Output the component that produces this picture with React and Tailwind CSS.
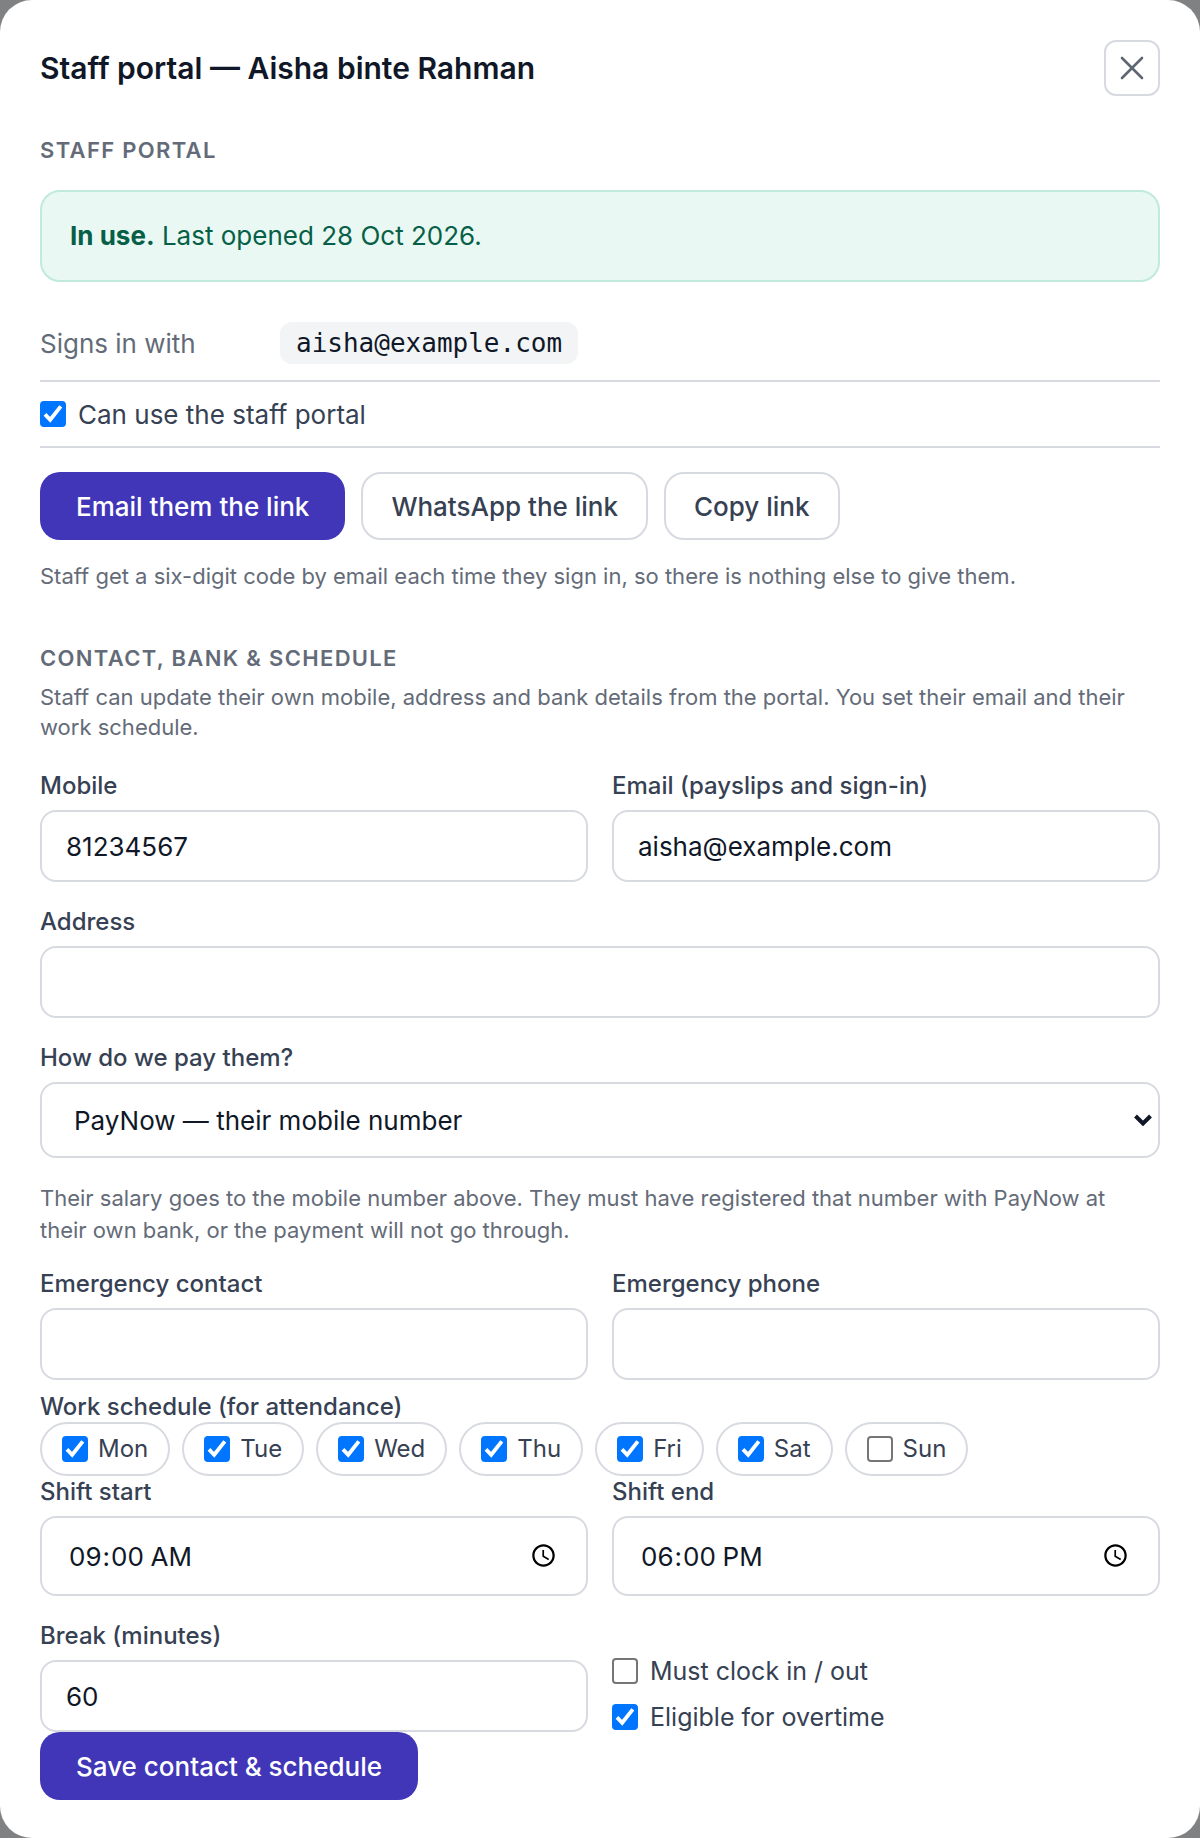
import { useState } from "react";

const inputClass =
  "block w-full text-[26px] text-gray-900 bg-white border-2 border-[#d7dae0] rounded-2xl";
const labelClass = "block mb-2 text-2xl leading-8 font-medium text-gray-700";
const sectionClass =
  "text-[22px] leading-8 font-semibold tracking-[0.06em] uppercase text-[#646b78]";
const buttonClass = "h-[68px] rounded-[20px] text-[26px] font-medium";
const primaryClass = "px-9 bg-[#4036b7] text-white";
const outlineClass = "px-7 bg-white border-2 border-[#d7dae0] text-gray-700";

const Field = ({ id, label, type = "text", value, onChange }) => (
  <div>
    <label htmlFor={id} className={labelClass}>
      {label}
    </label>
    <input
      id={id}
      type={type}
      value={value}
      onChange={(e) => onChange(id, e.target.value)}
      className={`${inputClass} ${
        type === "time" ? "h-20 px-[26px]" : "h-[72px] px-6"
      }`}
    />
  </div>
);

const Checkbox = ({ checked, onChange }) => (
  <span className="grid shrink-0">
    <input
      type="checkbox"
      checked={checked}
      onChange={onChange}
      className="col-start-1 row-start-1 w-[26px] h-[26px] appearance-none bg-white border-2 border-[#767676] rounded checked:bg-[#0075ff] checked:border-[#0075ff]"
    />
    {checked && (
      <svg
        viewBox="0 0 26 26"
        fill="none"
        stroke="white"
        strokeWidth="3.8"
        className="col-start-1 row-start-1 w-[26px] h-[26px] pointer-events-none"
      >
        <path d="M5 13.4l5.2 5.4L20.8 5.4" />
      </svg>
    )}
  </span>
);

const weekdays = ["Mon", "Tue", "Wed", "Thu", "Fri", "Sat", "Sun"];

const App = () => {
  const [form, setForm] = useState({
    mobile: "81234567",
    email: "aisha@example.com",
    address: "",
    payMethod: "paynow-mobile",
    emergencyContact: "",
    emergencyPhone: "",
    shiftStart: "09:00",
    shiftEnd: "18:00",
    breakMinutes: "60",
  });
  const [portalAccess, setPortalAccess] = useState(true);
  const [mustClock, setMustClock] = useState(false);
  const [overtime, setOvertime] = useState(true);
  const [workDays, setWorkDays] = useState(weekdays.slice(0, 6));

  const setField = (name, value) => setForm({ ...form, [name]: value });

  const toggleDay = (day) => {
    setWorkDays(
      workDays.includes(day)
        ? workDays.filter((d) => d !== day)
        : [...workDays, day]
    );
  };

  return (
    <div className="min-h-screen bg-[#808183] font-['Inter',sans-serif]">
      <div
        role="dialog"
        aria-labelledby="dialog-title"
        className="bg-white rounded-[32px] px-10 pt-10 pb-[38px]"
      >
        {/* Header */}
        <div className="flex items-center justify-between">
          <h1
            id="dialog-title"
            className="text-[30px] leading-10 font-semibold text-gray-900"
          >
            Staff portal — Aisha binte Rahman
          </h1>
          <button
            type="button"
            aria-label="Close"
            className="w-14 h-14 flex items-center justify-center border-2 border-[#d7dae0] rounded-xl text-[#5f6673]"
          >
            <svg
              viewBox="0 0 24 24"
              fill="none"
              stroke="currentColor"
              strokeWidth="2.6"
              strokeLinecap="round"
              className="w-6 h-6"
            >
              <path d="M2 2l20 20M22 2L2 22" />
            </svg>
          </button>
        </div>

        {/* Portal access */}
        <h2 className={`mt-[38px] ${sectionClass}`}>Staff portal</h2>
        <div className="mt-6 px-7 py-6 border-2 border-[#bfeadc] rounded-[20px] bg-[#e9f8f3] text-[26px] leading-10 text-[#065f46]">
          <strong className="font-bold">In use.</strong> Last opened 28 Oct
          2026.
        </div>

        <div className="mt-6 py-4 flex items-center border-b-2 border-[#d7dae0] text-[26px]">
          <span className="w-60 text-[#646b78]">Signs in with</span>
          <code className="h-[42px] px-4 leading-[42px] rounded-xl bg-gray-100 text-gray-900 font-['DejaVu_Sans_Mono',monospace]">
            aisha@example.com
          </code>
        </div>
        <label className="flex items-center gap-3 h-[66px] border-b-2 border-[#d7dae0] text-[26px] text-gray-700">
          <Checkbox
            checked={portalAccess}
            onChange={(e) => setPortalAccess(e.target.checked)}
          />
          Can use the staff portal
        </label>

        <div className="mt-6 flex flex-wrap gap-4">
          <button type="button" className={`${buttonClass} ${primaryClass}`}>
            Email them the link
          </button>
          <button type="button" className={`${buttonClass} ${outlineClass}`}>
            WhatsApp the link
          </button>
          <button type="button" className={`${buttonClass} ${outlineClass}`}>
            Copy link
          </button>
        </div>
        <p className="mt-5 text-[22px] leading-8 text-[#646b78]">
          Staff get a six-digit code by email each time they sign in, so there
          is nothing else to give them.
        </p>

        {/* Contact, bank and schedule */}
        <h2 className={`mt-[50px] ${sectionClass}`}>
          Contact, bank &amp; schedule
        </h2>
        <p className="mt-2 text-[22px] leading-[30px] text-[#646b78]">
          Staff can update their own mobile, address and bank details from the
          portal. You set their email and their work schedule.
        </p>

        <form onSubmit={(e) => e.preventDefault()}>
          <div className="mt-7 grid grid-cols-2 gap-6">
            <Field id="mobile" label="Mobile" value={form.mobile} onChange={setField} />
            <Field
              id="email"
              type="email"
              label="Email (payslips and sign-in)"
              value={form.email}
              onChange={setField}
            />
            <div className="col-span-2">
              <Field id="address" label="Address" value={form.address} onChange={setField} />
            </div>
            <div className="col-span-2">
              <label htmlFor="payMethod" className={labelClass}>
                How do we pay them?
              </label>
              <div className="relative">
                <select
                  id="payMethod"
                  value={form.payMethod}
                  onChange={(e) => setField("payMethod", e.target.value)}
                  className={`${inputClass} h-[76px] pl-8 pr-12 appearance-none`}
                >
                  <option value="paynow-mobile">
                    PayNow — their mobile number
                  </option>
                  <option value="bank">Bank transfer</option>
                </select>
                <svg
                  viewBox="0 0 18 12"
                  fill="none"
                  stroke="currentColor"
                  strokeWidth="4"
                  className="absolute right-2 inset-y-0 my-auto w-[18px] h-3 text-gray-900 pointer-events-none"
                >
                  <path d="M1.5 2L9 9.5 16.5 2" />
                </svg>
              </div>
            </div>
          </div>
          <p className="mt-6 pr-6 text-[22px] leading-8 text-[#646b78]">
            Their salary goes to the mobile number above. They must have
            registered that number with PayNow at their own bank, or the payment
            will not go through.
          </p>

          <div className="mt-[22px] grid grid-cols-2 gap-6">
            <Field
              id="emergencyContact"
              label="Emergency contact"
              value={form.emergencyContact}
              onChange={setField}
            />
            <Field
              id="emergencyPhone"
              label="Emergency phone"
              value={form.emergencyPhone}
              onChange={setField}
            />
          </div>

          <fieldset className="mt-3">
            <legend className="text-2xl leading-[30px] font-medium text-gray-700">
              Work schedule (for attendance)
            </legend>
            <div className="flex flex-wrap gap-3">
              {weekdays.map((day) => (
                <label
                  key={day}
                  className="flex items-center gap-[10px] h-[54px] px-5 border-2 border-[#d7dae0] rounded-full text-2xl text-gray-700"
                >
                  <Checkbox
                    checked={workDays.includes(day)}
                    onChange={() => toggleDay(day)}
                  />
                  {day}
                </label>
              ))}
            </div>
          </fieldset>

          <div className="grid grid-cols-2 gap-6">
            <Field
              id="shiftStart"
              type="time"
              label="Shift start"
              value={form.shiftStart}
              onChange={setField}
            />
            <Field
              id="shiftEnd"
              type="time"
              label="Shift end"
              value={form.shiftEnd}
              onChange={setField}
            />
            <Field
              id="breakMinutes"
              label="Break (minutes)"
              value={form.breakMinutes}
              onChange={setField}
            />
            <div className="flex flex-col justify-end gap-4 text-[25px] leading-[30px] text-gray-700">
              <label className="flex items-center gap-3">
                <Checkbox
                  checked={mustClock}
                  onChange={(e) => setMustClock(e.target.checked)}
                />
                Must clock in / out
              </label>
              <label className="flex items-center gap-3">
                <Checkbox
                  checked={overtime}
                  onChange={(e) => setOvertime(e.target.checked)}
                />
                Eligible for overtime
              </label>
            </div>
          </div>

          <button type="submit" className={`${buttonClass} ${primaryClass}`}>
            Save contact &amp; schedule
          </button>
        </form>
      </div>
    </div>
  );
};

export default App;
